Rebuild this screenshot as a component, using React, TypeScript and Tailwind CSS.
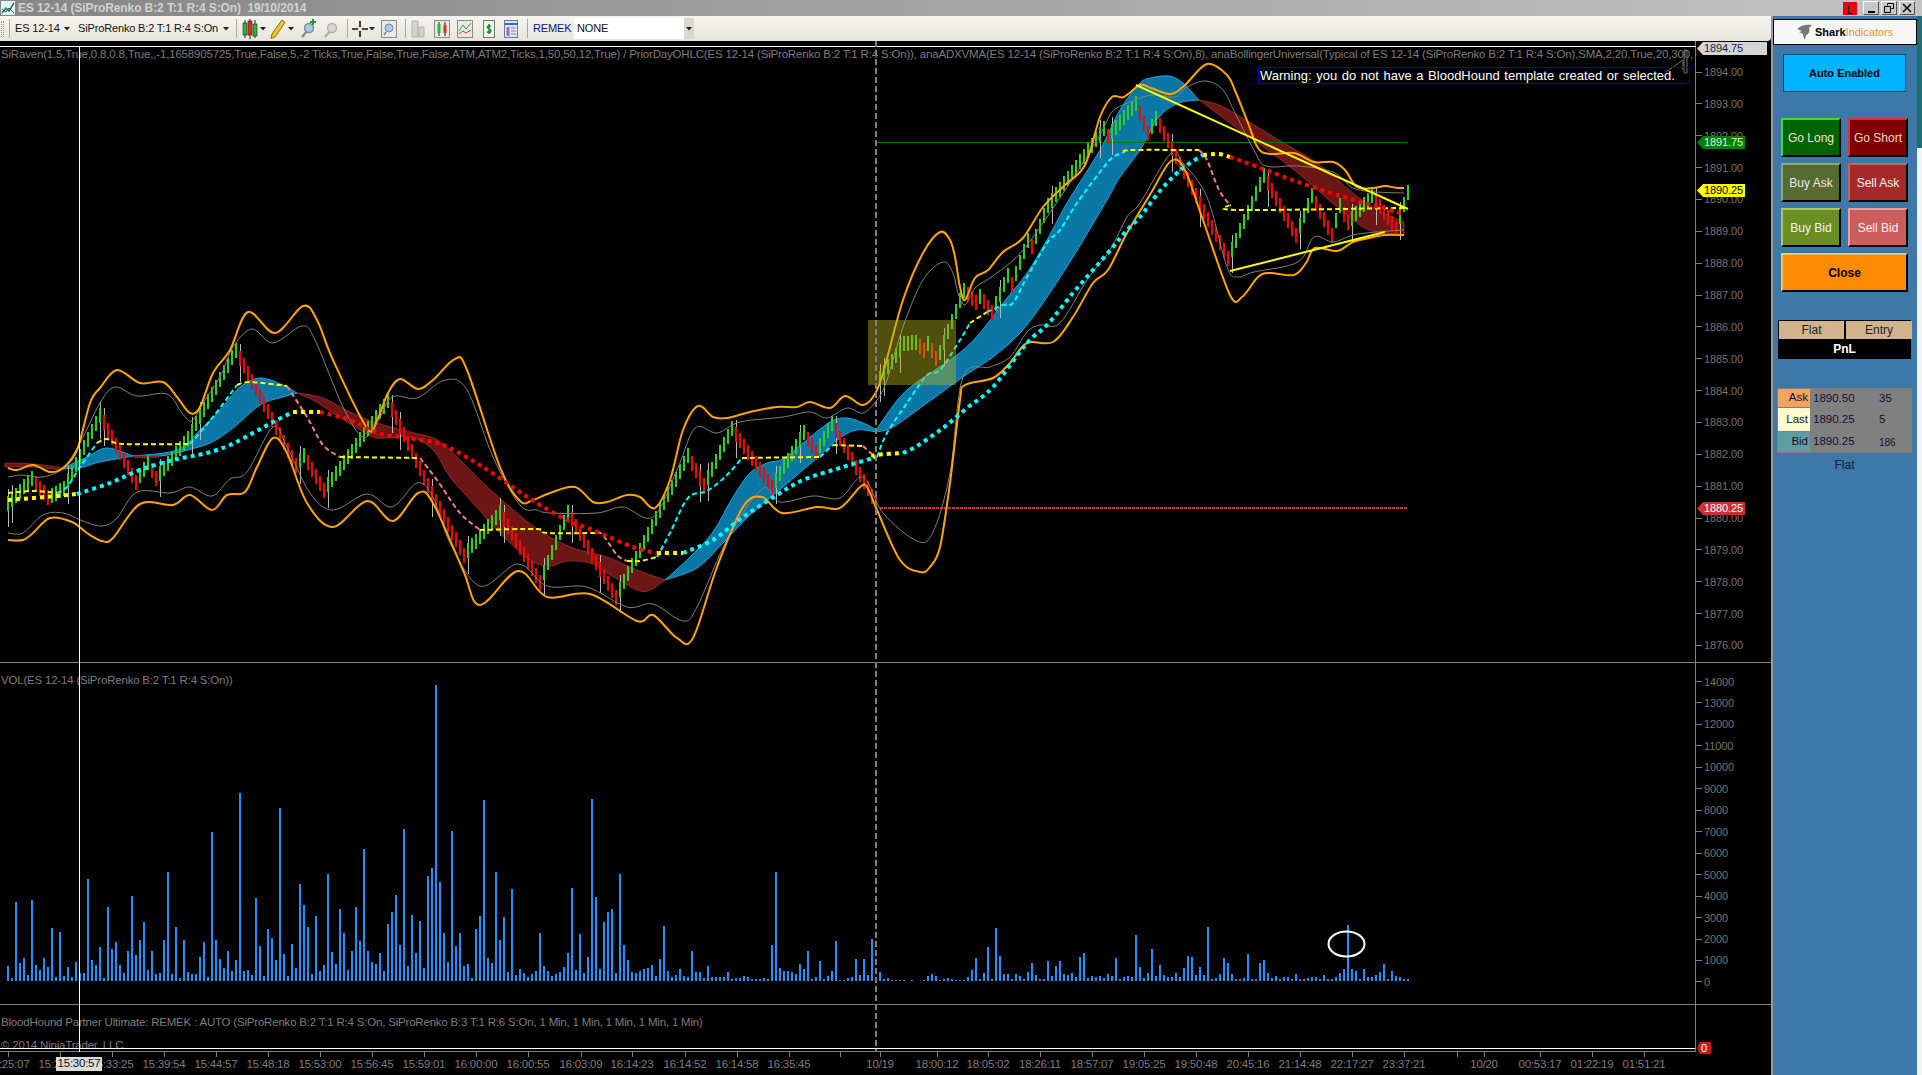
import React from "react";

type Pt = number[];

// catmull-rom through the traced points
const smooth = (p: Pt[]) => {
  let d = `M${p[0][0]} ${p[0][1]}`;
  for (let i = 0; i < p.length - 1; i++) {
    const a = p[Math.max(i - 1, 0)];
    const b = p[i];
    const c = p[i + 1];
    const e = p[Math.min(i + 2, p.length - 1)];
    const c1x = b[0] + (c[0] - a[0]) / 6;
    const c1y = b[1] + (c[1] - a[1]) / 6;
    const c2x = c[0] - (e[0] - b[0]) / 6;
    const c2y = c[1] - (e[1] - b[1]) / 6;
    d += ` C${c1x.toFixed(1)} ${c1y.toFixed(1)} ${c2x.toFixed(1)} ${c2y.toFixed(1)} ${c[0]} ${c[1]}`;
  }
  return d;
};
const band = (up: Pt[], low: Pt[]) => smooth(up) + smooth(low).replace("M", " L") + " Z";

const orangeUp: Pt[] = [[8,468],[17,470],[33,465],[50,472],[63,468],[77,450],[90,403],[100,388],[117,370],[140,383],[163,382],[177,397],[190,413],[200,407],[213,373],[230,350],[248,312],[275,333],[303,306],[317,320],[333,360],[367,428],[377,420],[388,393],[400,379],[418,389],[433,380],[455,359],[467,370],[500,467],[520,501],[533,500],[550,493],[575,487],[593,502],[607,502],[627,495],[640,497],[655,508],[670,480],[683,430],[698,406],[713,417],[727,418],[750,412],[777,407],[797,407],[810,402],[830,408],[845,396],[862,405],[873,397],[883,373],[903,300],[923,253],[940,232],[950,240],[955,257],[960,287],[965,300],[975,278],[988,270],[1003,252],[1023,238],[1043,207],[1065,185],[1085,165],[1100,117],[1112,97],[1124,97],[1140,85],[1151,88],[1171,94],[1185,85],[1207,64],[1227,75],[1236,93],[1248,123],[1258,148],[1270,154],[1294,153],[1314,162],[1333,162],[1345,170],[1357,187],[1373,188],[1385,186],[1397,188],[1404,188]];
const orangeLow: Pt[] = [[8,540],[23,540],[33,533],[50,518],[72,522],[87,533],[102,541],[113,538],[140,504],[173,505],[190,495],[212,510],[227,495],[245,492],[257,467],[273,438],[287,453],[307,503],[333,527],[367,501],[393,521],[418,493],[433,503],[463,570],[480,605],[518,571],[547,597],[590,594],[637,621],[653,615],[677,638],[693,638],[717,567],[743,507],[762,497],[782,513],[817,507],[840,508],[860,487],[867,487],[877,510],[900,560],[920,572],[930,567],[940,547],[950,483],[960,400],[965,385],[993,378],[1010,363],[1027,343],[1053,342],[1073,317],[1093,283],[1108,270],[1127,233],[1151,193],[1171,161],[1185,170],[1203,220],[1230,295],[1242,297],[1258,277],[1270,273],[1294,275],[1306,263],[1315,248],[1337,251],[1353,242],[1369,238],[1385,235],[1404,235]];
const grayUp: Pt[] = [[8,477],[23,475],[43,477],[63,468],[80,443],[100,403],[115,387],[137,396],[167,394],[182,413],[192,421],[203,403],[220,377],[233,347],[252,329],[273,343],[302,326],[315,340],[343,407],[363,437],[377,423],[392,397],[417,398],[445,380],[467,390],[493,457],[520,505],[537,510],[550,513],[597,513],[623,507],[653,517],[677,470],[695,428],[717,433],[740,422],[783,417],[810,412],[827,418],[847,408],[863,413],[877,400],[887,380],[903,327],[923,280],[943,262],[953,273],[958,293],[965,305],[975,288],[990,278],[1010,263],[1023,250],[1043,223],[1075,175],[1100,135],[1112,112],[1128,103],[1151,95],[1175,97],[1187,87],[1206,81],[1223,90],[1236,115],[1254,150],[1266,166],[1298,166],[1333,172],[1353,188],[1377,192],[1404,193]];
const grayLow: Pt[] = [[8,533],[23,533],[43,515],[63,513],[83,521],[102,526],[117,518],[137,492],[170,493],[190,487],[212,496],[230,479],[247,472],[273,427],[287,447],[310,493],[333,510],[367,494],[392,507],[417,483],[433,497],[450,543],[480,586],[518,564],[547,586],[587,587],[627,607],[653,604],[683,621],[697,607],[727,540],[762,489],[780,502],[813,496],[840,498],[863,477],[883,513],[917,541],[933,532],[950,473],[963,377],[990,367],[1010,357],[1027,332],[1040,325],[1060,323],[1087,280],[1110,250],[1127,217],[1140,203],[1171,153],[1183,163],[1207,197],[1227,267],[1238,277],[1254,272],[1298,262],[1314,237],[1333,242],[1353,235],[1377,232],[1404,230]];

const blueClouds = [
  band([[63,468],[87,457],[107,448],[133,456]], [[133,456],[100,462],[83,467],[63,469]]),
  band([[133,456],[177,450],[200,430],[220,410],[240,387],[260,378],[283,385],[297,393]], [[297,393],[283,397],[260,405],[233,428],[210,443],[180,452],[160,456],[133,456]]),
  band([[665,580],[690,557],[713,532],[733,497],[750,473],[767,463],[783,459],[803,443],[830,422],[847,418],[863,423],[877,430]], [[877,432],[857,430],[840,438],[817,458],[783,487],[750,515],[723,543],[697,568],[665,580]]),
  band([[876,430],[900,397],[920,380],[957,355],[980,333],[1003,303],[1027,273],[1047,240],[1067,203],[1100,150],[1120,110],[1140,83],[1151,78],[1169,76],[1183,83],[1199,100]], [[1199,100],[1179,103],[1159,117],[1140,150],[1120,177],[1107,200],[1073,257],[1043,303],[1020,333],[993,357],[963,377],[927,403],[893,427],[876,432]]),
];
const redClouds = [
  band([[5,463],[33,464],[63,468]], [[63,470],[33,467],[5,467]]),
  band([[133,456],[145,456],[160,456]], [[160,457],[145,458],[133,457]]),
  band([[297,393],[323,398],[350,412],[377,423],[410,432],[433,438],[450,450],[483,483],[517,513],[543,533],[573,548],[607,557],[637,570],[665,580]], [[665,580],[650,590],[637,590],[607,573],[590,563],[567,561],[550,566],[530,560],[500,533],[473,503],[450,477],[433,450],[410,437],[377,438],[357,428],[333,413],[313,400],[297,393]]),
  band([[1199,100],[1219,105],[1246,120],[1282,142],[1317,163],[1353,193],[1377,210],[1404,222]], [[1404,235],[1385,233],[1365,228],[1337,207],[1298,173],[1258,143],[1230,123],[1199,100]]),
];

const dots = [
  { c: "#ffff00", p: [[8,500],[57,496],[77,494]] },
  { c: "#00ffff", p: [[77,494],[110,483],[140,470],[173,460],[207,453],[230,445],[253,433],[273,422],[293,412]] },
  { c: "#ffff00", p: [[293,412],[320,412]] },
  { c: "#ff0000", p: [[320,412],[350,420],[377,433],[400,437],[433,442],[450,448],[483,467],[517,490],[540,505],[567,520],[593,530],[633,547],[657,553]] },
  { c: "#ffff00", p: [[657,553],[683,553]] },
  { c: "#00ffff", p: [[683,553],[713,540],[743,517],[777,495],[803,480],[843,467],[873,458]] },
  { c: "#ffff00", p: [[873,458],[876,455],[903,453]] },
  { c: "#00ffff", p: [[903,453],[917,446],[943,428],[967,408],[993,387],[1027,343],[1047,325],[1073,293],[1093,270],[1113,247],[1127,230],[1140,217],[1159,192],[1175,175],[1187,165],[1203,155]] },
  { c: "#ffff00", p: [[1203,155],[1219,154],[1230,157]] },
  { c: "#ff0000", p: [[1230,157],[1258,167],[1298,182],[1337,195],[1365,203],[1404,214]] },
];
const dashes = [
  { c: "#ffff00", p: [[8,493],[33,491],[57,493]] },
  { c: "#00ffff", p: [[57,493],[67,487],[80,467],[97,443]] },
  { c: "#ffff00", p: [[97,443],[107,439],[123,444],[190,444]] },
  { c: "#00ffff", p: [[190,444],[213,417],[237,385]] },
  { c: "#ffff00", p: [[237,385],[250,382],[287,386]] },
  { c: "#f08080", p: [[287,386],[307,417],[323,445],[340,457]] },
  { c: "#ffff00", p: [[340,457],[420,458]] },
  { c: "#f08080", p: [[420,458],[437,480],[460,513],[480,530]] },
  { c: "#ffff00", p: [[480,530],[537,529],[547,533],[597,533]] },
  { c: "#f08080", p: [[597,533],[603,535],[617,555],[627,561]] },
  { c: "#ffff00", p: [[627,561],[640,561],[657,557]] },
  { c: "#00ffff", p: [[657,557],[670,533],[688,498],[707,491],[727,475],[742,458]] },
  { c: "#ffff00", p: [[742,458],[820,457]] },
  { c: "#00ffff", p: [[820,457],[833,445]] },
  { c: "#ffff00", p: [[833,445],[863,446]] },
  { c: "#f08080", p: [[863,446],[875,457]] },
  { c: "#00ffff", p: [[877,457],[887,433],[907,403],[927,375],[940,370],[960,340],[970,323]] },
  { c: "#ffff00", p: [[970,323],[987,312]] },
  { c: "#00ffff", p: [[987,312],[1003,305],[1013,303],[1027,277],[1047,243],[1060,230],[1077,203],[1100,172],[1112,158],[1124,152]] },
  { c: "#ffff00", p: [[1124,152],[1132,150],[1199,150]] },
  { c: "#f08080", p: [[1199,150],[1207,160],[1219,190],[1230,205]] },
  { c: "#ffff00", p: [[1230,205],[1238,210],[1404,208]] },
];

// renko turning points, bars are generated between them on a 4px pitch
const pivots: Pt[] = [[8,503],[32,478],[48,497],[64,488],[100,415],[136,482],[148,462],[156,478],[188,438],[236,350],[296,465],[304,455],[324,490],[388,400],[428,485],[464,555],[500,512],[540,582],[568,512],[616,597],[688,455],[704,485],[732,428],[772,487],[804,432],[816,452],[832,423],[876,503]];
const pivots2: Pt[] = [[880,378],[904,343],[916,342],[924,350],[928,343],[932,350],[936,358],[940,352],[964,290],[976,302],[980,296],[992,312],[1008,275],[1012,284],[1028,240],[1032,246],[1048,205],[1104,128],[1108,136],[1136,103],[1148,133],[1156,118],[1168,140],[1228,258],[1264,175],[1296,235],[1312,195],[1332,235],[1340,205],[1348,222],[1372,195],[1396,228],[1408,192]];

const makeBars = (piv: Pt[]) => {
  const bars: { x: number; y: number; up: boolean; wick: boolean }[] = [];
  piv.forEach((p, k) => {
    if (k === 0) {
      bars.push({ x: p[0], y: p[1], up: true, wick: true });
      return;
    }
    const q = piv[k - 1];
    const n = Math.round((p[0] - q[0]) / 4);
    for (let i = 1; i <= n; i++) {
      const x = q[0] + i * 4;
      bars.push({
        x,
        y: q[1] + ((p[1] - q[1]) * i) / n,
        up: p[1] < q[1],
        wick: (i === 1 && n >= 6) || x % 100 === 0,
      });
    }
  });
  return bars;
};
const bars = [...makeBars(pivots), ...makeBars(pivots2)];

// bar tops as read off the reference, baseline 963 in the 3x crop
const volTops = [918,954,726,909,894,945,720,915,930,894,921,804,951,816,948,921,951,906,939,939,657,900,915,861,954,741,867,846,915,939,873,708,885,840,786,930,873,942,939,840,636,942,801,954,840,936,942,942,891,846,951,516,840,897,924,873,933,900,399,933,930,945,714,858,948,807,834,900,444,882,948,852,924,672,735,801,942,768,933,915,642,876,912,747,819,930,873,741,843,567,873,906,912,879,933,792,756,705,855,507,918,765,879,783,924,648,624,75,666,819,906,513,858,819,918,912,954,807,768,420,894,909,636,840,
771,936,687,945,927,939,951,942,933,819,918,933,948,942,936,921,879,684,930,822,939,891,417,711,927,786,756,747,939,642,855,900,936,939,933,927,924,915,948,897,798,933,951,945,927,948,951,873,936,936,954,918,951,951,951,951,936,957,954,954,948,951,957,957,957,954,957,855,636,924,933,933,936,942,912,927,873,957,951,903,957,948,933,843,960,960,954,951,897,945,897,945,837,951,936,957,954,960,960,960,960,963,960,963,963,960,948,942,948,960,957,954,957,960,960,960,951,930,894,957,939,861,957,804,888,
942,942,957,942,948,957,936,909,945,957,957,903,948,918,903,942,945,939,951,891,879,954,948,951,948,954,942,948,894,957,951,948,951,825,921,954,939,867,948,915,945,951,951,939,951,924,888,891,945,921,945,801,957,954,942,894,909,942,957,957,954,882,957,957,909,900,939,954,948,957,951,951,957,942,957,957,954,951,951,957,945,957,957,951,939,927,795,927,933,957,927,951,951,945,936,912,957,933,948,951,957,957];

const priceTicks = Array.from({ length: 19 }, (_, i) => ({ y: 72 + i * 31.86, label: (1894 - i).toFixed(2) }));
const volTicks = Array.from({ length: 15 }, (_, i) => ({ y: 681.5 + i * 21.46, label: String((14 - i) * 1000) }));

const timeLabels: [number, string][] = [[8,"15:25:07"],[60,"15:30:00"],[112,"15:33:25"],[164,"15:39:54"],[216,"15:44:57"],[268,"15:48:18"],[320,"15:53:00"],[372,"15:56:45"],[424,"15:59:01"],[476,"16:00:00"],[528,"16:00:55"],[581,"16:03:09"],[632,"16:14:23"],[685,"16:14:52"],[737,"16:14:58"],[789,"16:35:45"],[880,"10/19"],[937,"18:00:12"],[988,"18:05:02"],[1040,"18:26:11"],[1092,"18:57:07"],[1144,"19:05:25"],[1196,"19:50:48"],[1248,"20:45:16"],[1300,"21:14:48"],[1352,"22:17:27"],[1404,"23:37:21"],[1484,"10/20"],[1540,"00:53:17"],[1592,"01:22:19"],[1644,"01:51:21"]];
const extraTicks = [840, 1457];

const Caret = () => (
  <svg width="6" height="4" viewBox="0 0 6 4" className="shrink-0">
    <path d="M0 0h6L3 3.5z" fill="#222" />
  </svg>
);
const Sep = ({ className }: { className: string }) => <div className={`h-[19px] w-px shrink-0 bg-[#a8a8a0] ${className}`} />;

const CandleIcon = () => (
  <svg width="16" height="20" viewBox="0 0 16 20">
    <path d="M3 1v18M8 0v20M13 1v18" stroke="#222" />
    <rect x="1" y="4" width="4" height="12" fill="#2fb52f" stroke="#222" strokeWidth=".6" />
    <rect x="6" y="2" width="4" height="14" fill="#e03020" stroke="#222" strokeWidth=".6" />
    <rect x="11" y="5" width="4" height="12" fill="#2fb52f" stroke="#222" strokeWidth=".6" />
  </svg>
);
const Lens = ({ gray, plus }: { gray?: boolean; plus?: boolean }) => (
  <svg width="16" height="20" viewBox="0 0 16 20">
    <path d="M2 18l5-6" stroke={gray ? "#b0b0b0" : "#8a8a8a"} strokeWidth="2.4" />
    <circle cx="9" cy="9" r="4.5" fill={gray ? "#d8d8d8" : "#a8c8e8"} stroke={gray ? "#b0b0b0" : "#7a8a9a"} strokeWidth="1.4" />
    {plus && <path d="M13 0v6M10 3h6" stroke="#10a020" strokeWidth="2" />}
  </svg>
);
const GrayDoc = ({ children }: { children: React.ReactNode }) => (
  <svg width="16" height="20" viewBox="0 0 16 20">
    <rect x=".5" y="1.5" width="15" height="17" fill="#e8e8e4" stroke="#8a8a8a" />
    {children}
  </svg>
);

function Toolbar() {
  return (
    <div className="flex h-[25px] shrink-0 items-center rounded-br-sm bg-gradient-to-b from-[#f5f4ef] to-[#e6e4dc] text-[11px] text-[#111] tracking-[-0.15px]">
      <div className="ml-px h-[16px] w-[3px] shrink-0 border-x border-dotted border-[#999]" />
      <Sep className="ml-[5px]" />
      <span className="ml-[5px] w-[43px] shrink-0 whitespace-nowrap">ES 12-14</span>
      <div className="ml-[6px] shrink-0"><Caret /></div>
      <span className="ml-[8px] w-[140px] shrink-0 whitespace-nowrap">SiProRenko B:2 T:1 R:4 S:On</span>
      <div className="ml-[5px] shrink-0"><Caret /></div>
      <Sep className="ml-[7px]" />
      <div className="ml-[5px] shrink-0"><CandleIcon /></div>
      <div className="ml-[2px] shrink-0"><Caret /></div>
      <svg width="16" height="20" viewBox="0 0 16 20" className="ml-[4px] shrink-0">
        <path d="M12 1l3 2.5L5 18l-4 1.500L2 15z" fill="#f5c518" stroke="#8a6a10" />
      </svg>
      <div className="ml-[2px] shrink-0"><Caret /></div>
      <div className="ml-[6px] shrink-0"><Lens plus /></div>
      <div className="ml-[7px] shrink-0"><Lens gray /></div>
      <Sep className="ml-[8px]" />
      <svg width="16" height="18" viewBox="0 0 16 18" className="ml-[4px] shrink-0">
        <path d="M8 1v6M8 11v6M0 9h6M10 9h6" stroke="#111" strokeWidth="1.6" />
      </svg>
      <div className="ml-px shrink-0"><Caret /></div>
      <div className="ml-[6px] shrink-0">
        <GrayDoc>
          <circle cx="8" cy="9" r="4" fill="#a8c8e8" stroke="#7a8a9a" />
          <path d="M5 13l-2 3" stroke="#7a8a9a" strokeWidth="1.600" />
        </GrayDoc>
      </div>
      <Sep className="ml-[8px]" />
      <svg width="14" height="20" viewBox="0 0 14 20" className="ml-[5px] shrink-0 opacity-70">
        <path d="M1 2h6v16H1zM8 8h5v10H8z" fill="#c8c8c8" stroke="#999" />
      </svg>
      <div className="ml-[9px] shrink-0"><GrayDoc><path d="M5 3v14M11 3v14" stroke="#222" /><rect x="3.500" y="5" width="3" height="9" fill="#2fb52f" /><rect x="9.500" y="6" width="3" height="8" fill="#e03020" /></GrayDoc></div>
      <div className="ml-[7px] shrink-0"><GrayDoc><path d="M2 12l4-6 3 4 5-6" fill="none" stroke="#2fa02f" /><path d="M2 15l4-3 3 2 5-3" fill="none" stroke="#e03020" /></GrayDoc></div>
      <svg width="12" height="20" viewBox="0 0 12 20" className="ml-[10px] shrink-0">
        <rect x=".5" y="1.500" width="11" height="17" fill="#f4f4ee" stroke="#777" />
        <path d="M6 5v10M8 7.500C6 6 4 7 4.500 8.500S8 10 8 12s-3 2-4 .5" fill="none" stroke="#138a26" strokeWidth="1.400" />
      </svg>
      <svg width="14" height="20" viewBox="0 0 14 20" className="ml-[9px] shrink-0">
        <rect x=".5" y="1.500" width="13" height="17" fill="#dfe6f2" stroke="#6a7a9a" />
        <path d="M1 5h12" stroke="#3a6ac8" strokeWidth="2" />
        <rect x="2.500" y="8" width="3" height="9" fill="#9a6ad8" />
        <path d="M7 9h5M7 12h5M7 15h5" stroke="#7a8aa8" />
      </svg>
      <Sep className="ml-[9px]" />
      <span className="ml-[5px] w-[35px] shrink-0 text-[#10108a]">REMEK</span>
      <div className="ml-[6px] flex h-[21px] w-[120px] shrink-0 items-center justify-between bg-white pl-[3px]">
        <span>NONE</span>
        <span className="flex h-full w-[10px] items-center justify-center bg-[#d8d8d0]"><Caret /></span>
      </div>
    </div>
  );
}

function Axis({ ticks, top }: { ticks: { y: number; label: string }[]; top: number }) {
  return (
    <>
      {ticks.map((t) => (
        <div key={t.label} className="absolute left-0 flex h-[12px] items-center" style={{ top: t.y - top - 6 }}>
          <span className="h-px w-[6px] bg-[#808080]" />
          <span className="ml-[2px] text-[11px] leading-[12px] text-[#77736a] tracking-[-0.1px]">{t.label}</span>
        </div>
      ))}
    </>
  );
}

function PriceTag({ y, label, className }: { y: number; label: string; className: string }) {
  return (
    <div
      className={`absolute left-px flex h-[13px] items-center pl-[7px] text-[11px] tracking-[-0.1px] [clip-path:polygon(6px_0,100%_0,100%_100%,6px_100%,0_50%)] ${className}`}
      style={{ top: y - 41 - 6 }}
    >
      {label}
    </div>
  );
}

function PriceChart() {
  return (
    <svg width="1695" height="621" viewBox="0 41 1695 621" className="block">
      {blueClouds.map((d, i) => (
        <path key={i} d={d} fill="#0a78a6" stroke="#24a4dc" strokeWidth="1" />
      ))}
      {redClouds.map((d, i) => (
        <path key={i} d={d} fill="#6e1616" stroke="#8c2c2c" strokeWidth="1" />
      ))}
      <path d="M876 142.500H1407" stroke="#008000" />
      <path d="M880 508H1407" stroke="#d03030" strokeWidth="2" strokeDasharray="3 1" />
      {bars.map((b, i) => (
        <g key={i} shapeRendering="crispEdges">
          {b.wick && <rect x={b.x} y={b.y - 14} width="1" height="38" fill="#b8b8b8" />}
          <rect x={b.x - 1} y={b.y - 7} width="2" height="15" fill={b.up ? "#33cc22" : "#ff0000"} />
        </g>
      ))}
      <path d={smooth(grayUp)} fill="none" stroke="#808080" />
      <path d={smooth(grayLow)} fill="none" stroke="#808080" />
      <path d={smooth(orangeUp)} fill="none" stroke="#ffa500" strokeWidth="2" />
      <path d={smooth(orangeLow)} fill="none" stroke="#ffa500" strokeWidth="2" />
      {dashes.map((s, i) => (
        <path key={i} d={smooth(s.p)} fill="none" stroke={s.c} strokeWidth="2" strokeDasharray="5 3" />
      ))}
      {dots.map((s, i) => (
        <path key={i} d={smooth(s.p)} fill="none" stroke={s.c} strokeWidth="4" strokeDasharray="4 4" />
      ))}
      <rect x="868" y="320" width="88" height="65" fill="#b4b020" opacity=".45" />
      <path d="M1136 85L1408 209M1230 271L1385 232" stroke="#ffff00" strokeWidth="2" />
      <path d="M1666 72L1683 60V70M1684 50v23h3V50z" fill="none" stroke="#707070" />
    </svg>
  );
}

function VolumeChart() {
  return (
    <svg width="1695" height="341" viewBox="0 663 1695 341" className="block">
      {volTops.map((top, i) => (
        <rect key={i} x={7 + i * 4} y={660 + top / 3} width="2" height={(963 - top) / 3} fill="#1e90ff" shapeRendering="crispEdges" />
      ))}
      <ellipse cx="1346.500" cy="944" rx="18" ry="12.500" fill="none" stroke="#ffffff" strokeWidth="2" />
    </svg>
  );
}

function OrderButton({ label, className }: { label: string; className: string }) {
  return (
    <div className={`flex h-[39px] items-center justify-center border-2 border-r-black border-b-black text-[12px] ${className}`}>
      {label}
    </div>
  );
}

function SharkPanel() {
  return (
    <aside className="flex w-[146px] shrink-0 flex-col border-l-2 border-[#9a9a9a] bg-[#3d78a8] pt-[3px] text-[12px]">
      <div className="flex h-[26px] shrink-0 items-center border border-black bg-[#f6f6f6] pl-[23px] font-bold text-[11px]">
        <svg width="16" height="16" viewBox="0 0 16 16" className="mr-[2px] shrink-0">
          <path d="M0 5C4 1 10 0 15 1L12 4C13 7 12 10 9 11L8 16C7 14 6 12 6 10L2 8L5 7z" fill="#787878" />
        </svg>
        <span className="text-black">Shark</span>
        <span className="font-normal text-[#e8962a]">Indicators</span>
      </div>
      <div className="ml-[10px] mt-[9px] flex h-[38px] w-[123px] shrink-0 items-center justify-center border border-[#0a4a78] bg-[#00b4ff] text-[11px] font-bold text-black">
        Auto Enabled
      </div>
      <div className="ml-[8px] mt-[26px] grid w-[127px] shrink-0 grid-cols-[60px_60px] gap-x-[7px] gap-y-[6px]">
        <OrderButton label="Go Long" className="border-l-[#33e033] border-t-[#33e033] bg-[#006400] text-[#e8e8d8]" />
        <OrderButton label="Go Short" className="border-l-[#e03030] border-t-[#e03030] bg-[#800000] text-[#f0d8c8]" />
        <OrderButton label="Buy Ask" className="border-l-[#90a870] border-t-[#90a870] bg-[#556b2f] text-[#e8e8e8]" />
        <OrderButton label="Sell Ask" className="border-l-[#d06060] border-t-[#d06060] bg-[#a52a2a] text-[#f4f4f4]" />
        <OrderButton label="Buy Bid" className="border-l-[#a8c860] border-t-[#a8c860] bg-[#6b8e23] text-[#f4f4f4]" />
        <OrderButton label="Sell Bid" className="border-l-[#e8a0a0] border-t-[#e8a0a0] bg-[#cd5c5c] text-[#f4f4f4]" />
        <OrderButton label="Close" className="col-span-2 border-l-[#ffc060] border-t-[#ffc060] bg-[#ff8c00] font-bold text-black" />
      </div>
      <div className="ml-[5px] mt-[28px] w-[133px] shrink-0 bg-black">
        <div className="grid h-[19px] grid-cols-[65px_66px] gap-x-[2px] p-px text-[#222] *:flex *:items-center *:justify-center *:bg-[#d2b48c]">
          <span>Flat</span>
          <span>Entry</span>
        </div>
        <div className="flex h-[20px] items-center justify-center font-bold text-white">PnL</div>
      </div>
      <div className="ml-[4px] mt-[29px] w-[135px] shrink-0 bg-[#808080] py-px text-[11.500px] text-[#101030]">
        {[
          { k: "Ask", p: "1890.50", s: "35", c: "bg-[#f4a460] h-[18px] mb-px" },
          { k: "Last", p: "1890.25", s: "5", c: "bg-[#fffacd] h-[23px] mb-px" },
          { k: "Bid", p: "1890.25", s: "186", c: "bg-[#5f9ea0] h-[20px]" },
        ].map((r) => (
          <div key={r.k} className="flex items-center">
            <div className={`ml-px flex w-[32px] items-center justify-end pr-[2px] ${r.c}`}>{r.k}</div>
            <span className="ml-[3px] w-[66px]">{r.p}</span>
            <span className={r.k === "Bid" ? "text-[10px]" : ""}>{r.s}</span>
          </div>
        ))}
      </div>
      <div className="ml-[4px] mt-[3px] w-[135px] text-center text-[#101840]">Flat</div>
    </aside>
  );
}

export default function App() {
  return (
    <div className="relative flex h-[1075px] w-[1922px] flex-col overflow-hidden bg-black [font-family:'Liberation_Sans',Arial,sans-serif]">
      {/* title bar */}
      <div className="flex h-[16px] shrink-0 items-center bg-gradient-to-r from-[#868686] to-[#c4c4c4]">
        <svg width="14" height="14" viewBox="0 0 14 14" className="ml-[1px] shrink-0">
          <rect width="14" height="14" fill="#e8f0f8" />
          <path d="M1 12l4-5 3 3 5-8" fill="none" stroke="#18803a" strokeWidth="1.500" />
          <path d="M1 8l4 3 3-4 5 5" fill="none" stroke="#2850b0" />
        </svg>
        <span className="ml-[3px] whitespace-pre text-[12px] font-bold text-[#d2d2d2] tracking-[-0.1px]">ES 12-14 (SiProRenko B:2 T:1 R:4 S:On)  19/10/2014</span>
        <div className="ml-auto flex items-center gap-[2px] pr-[7px]">
          <div className="mr-[4px] flex h-[13px] w-[14px] items-center justify-center bg-[#ee0000]">
            <span className="mt-[3px] h-[8px] w-[5px] border-b border-l border-black" />
          </div>
          {["min", "max", "close"].map((b) => (
            <div key={b} className="flex h-[14px] w-[16px] items-center justify-center border border-b-[#555] border-l-white border-r-[#555] border-t-white bg-[#c8c8c8]">
              {b === "min" && <span className="mt-[7px] h-[2px] w-[7px] bg-black" />}
              {b === "max" && (
                <svg width="10" height="10" viewBox="0 0 10 10">
                  <path d="M3.500 2.500V.5h6v5H7.500M.5 3.500h6v6h-6z" fill="none" stroke="#000" />
                </svg>
              )}
              {b === "close" && (
                <svg width="10" height="10" viewBox="0 0 10 10">
                  <path d="M1 1l8 8M9 1l-8 8" stroke="#000" strokeWidth="1.500" />
                </svg>
              )}
            </div>
          ))}
        </div>
      </div>

      <div className="flex min-h-0 flex-1">
        <div className="relative flex w-[1771px] shrink-0 flex-col">
          <Toolbar />

          {/* price pane */}
          <div className="flex h-[622px] shrink-0 border-b border-[#808080]">
            <div className="relative w-[1695px] shrink-0">
              <PriceChart />
              <div className="absolute left-px right-0 top-[6px] overflow-hidden whitespace-nowrap text-[11.500px] leading-[14px] text-[#7d7d7d] tracking-[-0.18px]">
                SiRaven(1.5,True,0.8,0.8,True,,-1,1658905725,True,False,5,-2 Ticks,True,False,True,False,ATM,ATM2,Ticks,1,50,50,12,True) / PriorDayOHLC(ES 12-14 (SiProRenko B:2 T:1 R:4 S:On)), anaADXVMA(ES 12-14 (SiProRenko B:2 T:1 R:4 S:On),8), anaBollingerUniversal(Typical of ES 12-14 (SiProRenko B:2 T:1 R:4 S:On),SMA,2,20,True,20,300, a
              </div>
              <div className="absolute left-[1258px] top-[26px] flex h-[17px] w-[432px] items-center whitespace-nowrap border border-[#0000c0] pl-px text-[13px] text-white [word-spacing:1px]">
                Warning: you do not have a BloodHound template created or selected.
              </div>
            </div>
            <div className="relative flex-1 border-l border-[#808080]">
              <Axis ticks={priceTicks} top={41} />
              <PriceTag y={48} label="1894.75" className="w-[70px] bg-[#d4d4d4] text-[#222244]" />
              <PriceTag y={142} label="1891.75" className="w-[48px] bg-[#008000] text-[#e8e8e8]" />
              <PriceTag y={190} label="1890.25" className="w-[48px] bg-[#ffff00] text-black" />
              <PriceTag y={508} label="1880.25" className="w-[48px] bg-[#c83232] text-white" />
            </div>
          </div>

          {/* volume pane */}
          <div className="flex h-[342px] shrink-0 border-b border-[#808080]">
            <div className="relative w-[1695px] shrink-0">
              <VolumeChart />
              <div className="absolute left-px top-[10px] whitespace-nowrap text-[11.500px] leading-[14px] text-[#7d7d7d] tracking-[-0.2px]">
                VOL(ES 12-14 (SiProRenko B:2 T:1 R:4 S:On))
              </div>
            </div>
            <div className="relative flex-1 border-l border-[#808080]">
              <Axis ticks={volTicks} top={663} />
            </div>
          </div>

          {/* footer of the chart with time axis */}
          <div className="flex h-[47px] shrink-0">
            <div className="h-[47px] w-[1695px] shrink-0 border-b border-[#808080]">
              <div className="h-[44px] overflow-hidden border-b border-white pl-px text-[11.500px] text-[#7d7d7d] tracking-[-0.2px]">
                <div className="mt-[10px] leading-[14px]">BloodHound Partner Ultimate: REMEK : AUTO (SiProRenko B:2 T:1 R:4 S:On, SiProRenko B:3 T:1 R:6 S:On, 1 Min, 1 Min, 1 Min, 1 Min, 1 Min)</div>
                <div className="mt-[9px] leading-[14px]">© 2014 NinjaTrader, LLC</div>
              </div>
            </div>
            <div className="relative flex-1 border-l border-[#808080]">
              <div className="absolute left-[1px] top-[37px] flex h-[12px] w-[14px] items-center justify-center bg-[#c81e1e] text-[11px] text-white [clip-path:polygon(3px_0,100%_0,100%_100%,3px_100%,0_50%)]">0</div>
            </div>
          </div>
          <div className="relative h-[23px] shrink-0 overflow-hidden text-[11.500px] text-[#7d7d7d] tracking-[-0.25px]">
            {extraTicks.map((x) => (
              <span key={x} className="absolute top-0 h-[5px] w-px bg-[#808080]" style={{ left: x }} />
            ))}
            {timeLabels.map(([x, t]) => (
              <React.Fragment key={t}>
                <span className="absolute top-0 h-[5px] w-px bg-[#808080]" style={{ left: x }} />
                <span className="absolute top-[5px] -translate-x-1/2 whitespace-nowrap leading-[14px]" style={{ left: x }}>{t}</span>
              </React.Fragment>
            ))}
            <span className="absolute left-[56px] top-[5px] flex h-[14px] w-[46px] items-center justify-center bg-[#dcdcdc] text-[#111]">15:30:57</span>
          </div>

          {/* crosshair and session line lie over all panes */}
          <svg width="1696" height="1011" viewBox="0 41 1696 1011" className="pointer-events-none absolute left-0 top-[25px]">
            <path d="M79.500 47V1052M0 46.500H1696" stroke="#ffffff" />
            <path d="M876 41V1052" stroke="#808080" strokeWidth="2" strokeDasharray="6 3" />
          </svg>
        </div>

        <SharkPanel />
        <div className="flex w-[5px] shrink-0 flex-col">
          <div className="h-[132px] bg-[#1e6e74]" />
          <div className="flex-1 bg-[#f4f4f4]" />
        </div>
      </div>
    </div>
  );
}
